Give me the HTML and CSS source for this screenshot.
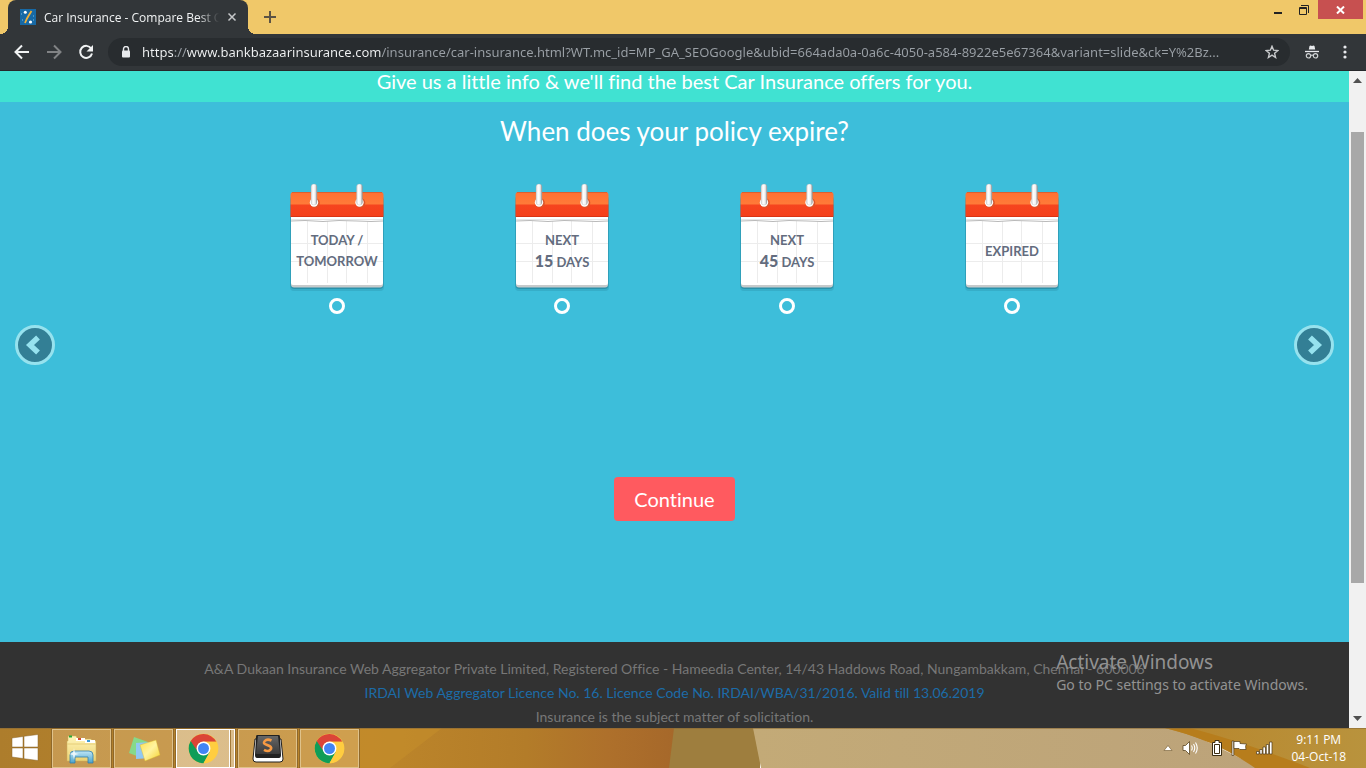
FILE: index.html
```html
<!DOCTYPE html>
<html lang="en">
<head>
<meta charset="utf-8">
<title>Car Insurance - Compare Best Car Insurance</title>
<link rel="stylesheet" href="styles.css">
</head>
<body>
<svg class="defs" aria-hidden="true">
  <defs>
    <linearGradient id="gOrange" x1="0" y1="0" x2="0" y2="1">
      <stop offset="0" stop-color="#ff7032"/><stop offset=".46" stop-color="#ff7a38"/><stop offset=".54" stop-color="#f6441e"/><stop offset="1" stop-color="#f43f1a"/>
    </linearGradient>
    <linearGradient id="gRing" x1="0" y1="0" x2="1" y2="0">
      <stop offset="0" stop-color="#d5d5d5"/><stop offset=".35" stop-color="#fff"/><stop offset=".7" stop-color="#eee"/><stop offset="1" stop-color="#8a8a8a"/>
    </linearGradient>
    <linearGradient id="gFolder" x1="0" y1="0" x2="0" y2="1"><stop offset="0" stop-color="#fff5b8"/><stop offset="1" stop-color="#ecd273"/></linearGradient>
    <linearGradient id="gStand" x1="0" y1="0" x2="0" y2="1"><stop offset="0" stop-color="#bfe6f6"/><stop offset="1" stop-color="#4ba3cc"/></linearGradient>
    <linearGradient id="gNote" x1="0" y1="0" x2="1" y2="1"><stop offset="0" stop-color="#ffe14d"/><stop offset=".5" stop-color="#fff3a0"/><stop offset="1" stop-color="#f5d22d"/></linearGradient>
    <linearGradient id="gKey" x1="0" y1="0" x2="0" y2="1"><stop offset="0" stop-color="#666"/><stop offset="1" stop-color="#3b3b3b"/></linearGradient>
  </defs>
  <symbol id="calendar" viewBox="0 0 100 112">
    <rect x="3" y="14" width="94" height="94" rx="4" fill="#1d6f86" opacity=".2"/>
    <rect x="3.500" y="12" width="93" height="94" rx="4" fill="#1d6f86" opacity=".45"/>
    <rect x="4" y="90" width="92" height="14.500" rx="3" fill="#c6cacb"/>
    <path d="M4 33H96V100a2 2 0 0 1-2 2H6a2 2 0 0 1-2-2Z" fill="#fff"/>
    <path d="M20.500 38V100M40.500 38V100M59.500 38V100M80.500 38V100M4 60.500H96M4 78.500H96" stroke="#ececec" fill="none"/>
    <path d="M3.500 12a3 3 0 0 1 3-3H93.500a3 3 0 0 1 3 3V34H3.500Z" fill="url(#gOrange)"/>
    <path d="M5 9.500H95" stroke="#db6030"/>
    <path d="M4 33.500H96" stroke="#d93313"/>
    <path d="M4 38 18 37.500 36 38.500 52 37.500 70 38 84 38.500 96 38" stroke="#b9b9b9" fill="none"/>
    <path d="M4 36.500H96" stroke="#e6e6e6" fill="none"/>
    <circle cx="28" cy="20" r="4.800" fill="#db542b"/><circle cx="73.500" cy="20" r="4.800" fill="#db542b"/>
    <circle cx="27" cy="19.500" r="4.200" fill="#fff"/><circle cx="72.500" cy="19.500" r="4.200" fill="#fff"/>
    <rect x="24" y="1" width="6" height="21" rx="3" fill="url(#gRing)" stroke="#a5a5a5" stroke-width=".3"/>
    <rect x="69.500" y="1" width="6" height="21" rx="3" fill="url(#gRing)" stroke="#a5a5a5" stroke-width=".3"/>
  </symbol>
  <symbol id="chrome" viewBox="0 0 48 48">
    <circle cx="24" cy="24" r="23" fill="#ffcd40"/>
    <path d="M24 24 4.100 12.500A23 23 0 0 0 24 47L34 29.700Z" fill="#0f9d58"/>
    <path d="M4.100 12.500A23 23 0 0 1 43.900 13.500H24a10.500 10.500 0 0 0-9.900 14Z" fill="#db4437"/>
    <path d="M24 47A23 23 0 0 0 43.900 13.500H24L33.500 29.500Z" fill="#ffcd40"/>
    <circle cx="24" cy="24" r="10.700" fill="#fff"/><circle cx="24" cy="24" r="8.500" fill="#4285f4"/>
  </symbol>
</svg>

<header class="browser">
  <div class="tabstrip">
    <div class="tab">
      <svg class="favicon" viewBox="0 0 16 16"><rect width="16" height="16" fill="#1769a5"/><path d="M11.500 2 9 6 7 9.500 5 14" stroke="#f2ae36" stroke-width="1.800" fill="none"/><circle cx="5.300" cy="3.300" r="1.500" fill="#fff"/><circle cx="10.500" cy="13" r="1.600" fill="#fff"/><path d="M1 5h1M2 11h1M13 7h1M13 11h1" stroke="#7fc0e5"/></svg>
      <span class="tab-title">Car Insurance - Compare Best Ca</span>
      <button class="icon-btn tab-close" aria-label="Close tab"><svg width="10" height="10" viewBox="0 0 10 10"><path d="M1.500 1.500 8.500 8.500M8.500 1.500 1.500 8.500" stroke="#c6c8ca" stroke-width="1.500"/></svg></button>
    </div>
    <button class="icon-btn new-tab" aria-label="New tab"><svg width="12" height="12" viewBox="0 0 12 12"><path d="M6 0V12M0 6H12" stroke="#5c5344" stroke-width="2"/></svg></button>
    <div class="window-controls">
      <button class="icon-btn win" aria-label="Minimize"><svg width="10" height="10" viewBox="0 0 10 10"><path d="M1 8H9" stroke="#222" stroke-width="2"/></svg></button>
      <button class="icon-btn win" aria-label="Restore"><svg width="10" height="10" viewBox="0 0 10 10"><path d="M2 .5H9.500V8M.5 2.500H7.500V9.500H.5ZM.5 3.500H7.500" stroke="#222" fill="none"/></svg></button>
      <button class="icon-btn win-close" aria-label="Close"><svg width="9" height="8" viewBox="0 0 9 8"><path d="M1 .5 8 7.500M8 .5 1 7.500" stroke="#fff" stroke-width="2"/></svg></button>
    </div>
  </div>
  <div class="toolbar">
    <div class="nav">
      <button class="icon-btn" aria-label="Back"><svg width="16" height="16" viewBox="0 0 16 16"><path d="M15 8H2M8 1.500 1.500 8 8 14.500" stroke="#f1f3f4" stroke-width="2" fill="none"/></svg></button>
      <button class="icon-btn" aria-label="Forward"><svg width="16" height="16" viewBox="0 0 16 16"><path d="M1 8H14M8 1.500 14.500 8 8 14.500" stroke="#818385" stroke-width="2" fill="none"/></svg></button>
      <button class="icon-btn" aria-label="Reload"><svg width="16" height="16" viewBox="0 0 16 16"><path d="M13.200 4.500A6 6 0 1 0 14 9.500" stroke="#f1f3f4" stroke-width="2" fill="none"/><path d="M15 1V7.500H8.500Z" fill="#f1f3f4"/></svg></button>
    </div>
    <div class="omnibox">
      <svg width="10" height="12" viewBox="0 0 10 12"><path d="M2.500 5V3a2.500 2.500 0 0 1 5 0V5" stroke="#e8eaed" stroke-width="1.400" fill="none"/><rect x="1" y="4.500" width="8" height="7" rx="1" fill="#e8eaed"/></svg>
      <input class="url" type="text" aria-label="Address" value="https://www.bankbazaarinsurance.com/insurance/car-insurance.html?WT.mc_id=MP_GA_SEOGoogle&amp;ubid=664ada0a-0a6c-4050-a584-8922e5e67364&amp;variant=slide&amp;ck=Y%2Bz...">
      <button class="icon-btn" aria-label="Bookmark"><svg width="14" height="14" viewBox="0 0 14 14"><path d="M7 1.300 8.600 5.200 12.900 5.500 9.600 8.300 10.600 12.500 7 10.200 3.400 12.500 4.400 8.300 1.100 5.500 5.400 5.200Z" stroke="#c8cacc" stroke-width="1.400" fill="none"/></svg></button>
    </div>
    <svg width="14" height="14" viewBox="0 0 14 14"><path d="M3.800 4.500 4.500 1 5.500.5 7 1 8.500.5 9.500 1 10.200 4.500Z" fill="#e8eaed"/><path d="M0 6.500H14" stroke="#e8eaed" stroke-width="1.300"/><g fill="none" stroke="#d0d3d5" stroke-width="1.200"><circle cx="3.500" cy="10.800" r="2.200"/><circle cx="10.500" cy="10.800" r="2.200"/><path d="M5.700 10.500Q7 9.500 8.300 10.500"/></g></svg>
    <button class="icon-btn menu" aria-label="Menu"><svg width="4" height="14" viewBox="0 0 4 14" fill="#e8eaed"><circle cx="2" cy="2" r="1.600"/><circle cx="2" cy="7" r="1.600"/><circle cx="2" cy="12" r="1.600"/></svg></button>
  </div>
</header>

<div class="viewport">
  <div class="page">
    <div class="banner">Give us a little info &amp; we'll find the best Car Insurance offers for you.</div>
    <main class="question">
      <button class="slide-btn" aria-label="Previous"><svg viewBox="0 0 40 40"><circle cx="20" cy="20" r="18.500" fill="#337f95" stroke="#96e2ee" stroke-width="3"/><path d="M23 12.500 15 20 23 27.500" stroke="#96e2ee" stroke-width="5.500" fill="none"/></svg></button>
      <form class="form">
        <h1>When does your policy expire?</h1>
        <div class="options">
          <label class="option"><span class="card"><svg class="cal"><use href="#calendar"/></svg><span class="caption">TODAY /<br>TOMORROW</span></span><input type="radio" name="expiry"></label>
          <label class="option"><span class="card"><svg class="cal"><use href="#calendar"/></svg><span class="caption">NEXT<br><b>15</b> DAYS</span></span><input type="radio" name="expiry"></label>
          <label class="option"><span class="card"><svg class="cal"><use href="#calendar"/></svg><span class="caption">NEXT<br><b>45</b> DAYS</span></span><input type="radio" name="expiry"></label>
          <label class="option"><span class="card"><svg class="cal"><use href="#calendar"/></svg><span class="caption">EXPIRED</span></span><input type="radio" name="expiry"></label>
        </div>
        <button class="continue" type="button">Continue</button>
      </form>
      <button class="slide-btn" aria-label="Next"><svg viewBox="0 0 40 40"><circle cx="20" cy="20" r="18.500" fill="#337f95" stroke="#96e2ee" stroke-width="3"/><path d="M16 12.500 24 20 16 27.500" stroke="#96e2ee" stroke-width="5.500" fill="none"/></svg></button>
    </main>
    <footer class="footer">
      <p>A&amp;A Dukaan Insurance Web Aggregator Private Limited, Registered Office - Hameedia Center, 14/43 Haddows Road, Nungambakkam, Chennai - 600006</p>
      <p><a href="#">IRDAI Web Aggregator Licence No. 16. Licence Code No. IRDAI/WBA/31/2016. Valid till 13.06.2019</a></p>
      <p>Insurance is the subject matter of solicitation.</p>
    </footer>
  </div>
  <div class="scrollbar">
    <svg width="9" height="5" viewBox="0 0 9 5"><path d="M4.500 0 9 5H0Z" fill="#505050"/></svg>
    <div class="track"><div class="thumb"></div></div>
    <svg width="9" height="5" viewBox="0 0 9 5"><path d="M4.500 5 9 0H0Z" fill="#505050"/></svg>
  </div>
  <div class="watermark"><strong>Activate Windows</strong><span>Go to PC settings to activate Windows.</span></div>
</div>

<div class="taskbar">
  <svg class="wallpaper" viewBox="0 0 1366 40" preserveAspectRatio="none" aria-hidden="true">
    <defs>
      <linearGradient id="wa"><stop offset="0" stop-color="#ad7d2c"/><stop offset=".55" stop-color="#bd862a"/><stop offset=".78" stop-color="#b37c29"/><stop offset=".9" stop-color="#ae702b"/><stop offset="1" stop-color="#a6682a"/></linearGradient>
      <linearGradient id="wb"><stop offset="0" stop-color="#c3aa77"/><stop offset="1" stop-color="#bca37a"/></linearGradient>
      <linearGradient id="wc"><stop offset="0" stop-color="#b8862c"/><stop offset="1" stop-color="#b9933d"/></linearGradient>
    </defs>
    <rect width="675" height="40" fill="url(#wa)"/>
    <path d="M340 0H442L390 40H340Z" fill="#c48e2c" opacity=".6"/>
    <path d="M674 0H760V40H669Z" fill="#9e7e3e"/>
    <path d="M753 0H1180L1260 40H761Z" fill="url(#wb)"/>
    <path d="M1165 0H1366V40H1262Q1215 12 1165 0Z" fill="url(#wc)"/>
    <path d="M1165 0H1190Q1250 16 1310 40H1255Q1215 12 1165 0Z" fill="#b77d1c"/>
    <path d="M0 .5H1366" stroke="#8a6a36" opacity=".6"/>
  </svg>
  <button class="start" aria-label="Start"><svg width="28" height="28" viewBox="0 0 28 28"><path d="M1 4 12 2.500V13H1ZM13 2.300 27 .5V13H13ZM1 14H12V24.500L1 23ZM13 14H27V26.500L13 24.700Z" fill="#fff" stroke="#8a6428" stroke-width=".5"/></svg></button>
  <div class="apps">
    <button class="app" aria-label="File Explorer"><svg width="34" height="32" viewBox="0 0 34 32"><path d="M3 4a1 1 0 0 1 1-1H11L12 5H18L19 6H26L27 8H31V28H2V8H3Z" fill="url(#gFolder)" stroke="#c9ad58" stroke-width=".5"/><path d="M11 5H20V8H11ZM20 7H30V10H20Z" fill="#fff"/><path d="M4 3.500H7" stroke="#25a83b" stroke-width="2"/><path d="M13 6H16" stroke="#d44c31" stroke-width="2"/><path d="M22 8H25" stroke="#3e9ad3" stroke-width="2"/><path d="M2 11H31" stroke="#e6ce79"/><path d="M5 30V22Q5 18 9 18H24Q28 18 28 22V30H23V24H10V30Z" fill="url(#gStand)" stroke="#327fa8" stroke-width=".8"/><path d="M9 15 10 20 14 21 10 22 9 27 8 22 4 21 8 20Z" fill="#fff" opacity=".8"/></svg></button>
    <button class="app" aria-label="Sticky Notes"><svg width="34" height="32" viewBox="0 0 34 32"><path d="M7 4 21 9 15 25 2 20Z" fill="#86d98a"/><path d="M9 10 23 9 24 25 9 26Z" fill="#91c8f2"/><path d="M13 12 29 7 33 22 18 28Z" fill="url(#gNote)" stroke="#d9b927" stroke-width=".4"/></svg></button>
    <button class="app active" aria-label="Chrome"><svg width="31" height="31"><use href="#chrome"/></svg></button>
    <button class="app" aria-label="Sublime Text"><svg width="32" height="30" viewBox="0 0 32 30"><path d="M3 5H29L31 25Q31 28 28 28H4Q1 28 1 25Z" fill="#fff" stroke="#1f1f1f"/><path d="M5 1H27Q28 1 28 3L29 21Q29 24 27 24H5Q3 24 3 21L4 3Q4 1 5 1Z" fill="#222"/><path d="M6 2H26L28 19Q28 20 27 20H5Q4 20 4 19Z" fill="url(#gKey)"/><path d="M19.500 6.500Q15 4.500 12.800 7T14 10.500L17.500 12Q20.500 13.500 18.300 15.800T12 15.800" stroke="#f79a43" stroke-width="2.600" fill="none"/></svg></button>
    <button class="app" aria-label="Chrome"><svg width="31" height="31"><use href="#chrome"/></svg></button>
  </div>
  <div class="tray">
    <svg width="10" height="6" viewBox="0 0 10 6"><path d="M5 .5 9 5.500H1Z" fill="#fff" stroke="#6f562a" stroke-width=".6"/></svg>
    <svg width="16" height="16" viewBox="0 0 16 16"><path d="M1 5.500H3.500L7.500 1.500V14.500L3.500 10.500H1Z" fill="#fff" stroke="#5a4520" stroke-width=".8"/><path d="M9.500 5.500Q11 8 9.500 10.500M11.500 4Q14 8 11.500 12M13.500 2.500Q17 8 13.500 13.500" stroke="#fff" stroke-width="1.100" fill="none"/></svg>
    <svg class="battery" width="10" height="16" viewBox="0 0 10 16"><path d="M3 .5H7V2.500H9.500V15.500H.5V2.500H3Z" fill="#fff" stroke="#3b2d12"/><path d="M2.500 4.500H7.500V13.500H2.500Z" fill="#fff" stroke="#3b2d12"/></svg>
    <svg width="16" height="16" viewBox="0 0 16 16"><path d="M1 1H2.800V15.500H1Z" fill="#fff" stroke="#4a3818" stroke-width=".7"/><path d="M3 1.500H9V3.500L15.500 4Q14 5.500 15 9.500H9L8 8.500H3Z" fill="#fff" stroke="#4a3818" stroke-width=".7"/></svg>
    <svg width="17" height="14" viewBox="0 0 17 14" fill="#fff" stroke="#4a3818" stroke-width=".7"><path d="M.5 10.500H3V13H.5ZM3.800 8.500H6.200V13H3.800ZM7 6H9.500V13H7ZM10.300 3.500H12.700V13H10.300ZM13.500 1H16V13H13.500Z"/></svg>
    <div class="clock"><time>9:11 PM</time><time>04-Oct-18</time></div>
  </div>
</div>
</body>
</html>
```
FILE: styles.css
```css
* { box-sizing: border-box; }

body {
  margin: 0;
  height: 100vh;
  display: flex;
  flex-direction: column;
  overflow: hidden;
  font-family: Lato, sans-serif;
  font-variant-ligatures: none;
}

button { font: inherit; font-variant-ligatures: none; margin: 0; cursor: pointer; }
svg { display: block; flex: none; }
.defs { position: absolute; width: 0; height: 0; }

.icon-btn {
  display: flex;
  align-items: center;
  justify-content: center;
  padding: 0;
  border: 0;
  background: none;
}

/* Browser window */
.browser {
  flex: none;
  background: #f0c869;
  font-family: "Noto Sans", sans-serif;
}

.tabstrip { display: flex; height: 34px; }

.tab {
  position: relative;
  display: flex;
  align-items: center;
  gap: 8px;
  width: 240px;
  margin-left: 8px;
  padding: 0 11px 0 12px;
  background: #323639;
  border-radius: 8px 8px 0 0;
}
.tab::before,
.tab::after {
  content: "";
  position: absolute;
  bottom: 0;
  width: 8px;
  height: 8px;
}
.tab::before { right: 100%; background: radial-gradient(circle at 0 0, transparent 8px, #323639 8px); }
.tab::after { left: 100%; background: radial-gradient(circle at 100% 0, transparent 8px, #323639 8px); }

.favicon { width: 16px; height: 16px; }
.tab-title {
  flex: 1;
  overflow: hidden;
  white-space: nowrap;
  font-family: "Open Sans", sans-serif;
  font-size: 12px;
  color: #f1f3f4;
  -webkit-mask-image: linear-gradient(90deg, #000 88%, transparent);
  mask-image: linear-gradient(90deg, #000 88%, transparent);
}
.new-tab { width: 44px; }

.window-controls { display: flex; margin-left: auto; padding-right: 3px; }
.win { width: 26px; height: 19px; }
.win-close { width: 45px; height: 19px; margin-left: 1px; background: #c75050; }

.toolbar {
  display: flex;
  align-items: center;
  height: 37px;
  padding: 0 19px 1px 14px;
  background: #323639;
  border-bottom: 1px solid #26282b;
}
.nav { display: flex; gap: 16px; }
.omnibox {
  flex: 1;
  display: flex;
  align-items: center;
  gap: 11px;
  height: 28px;
  margin: 0 15px 0 14px;
  padding: 0 11px 0 13px;
  background: #282c2f;
  border-radius: 14px;
}
.url {
  flex: 1;
  min-width: 0;
  padding: 0;
  border: 0;
  outline: 0;
  font-family: "Noto Sans", sans-serif;
  font-size: 13px;
  color: transparent;
  background: linear-gradient(90deg, #f1f3f4 32px, #9aa0a6 32px, #9aa0a6 45px, #f1f3f4 45px, #f1f3f4 239px, #9aa0a6 239px);
  -webkit-background-clip: text;
  background-clip: text;
}
.menu { margin-left: 24px; }

/* Page */
.viewport {
  position: relative;
  flex: 1;
  min-height: 0;
  display: flex;
}
.page {
  flex: 1;
  display: flex;
  flex-direction: column;
  overflow: hidden;
}
.banner {
  height: 31px;
  line-height: 20px;
  text-align: center;
  font-size: 20px;
  color: #fff;
  background: #40e2d2;
}
.question {
  flex: 1;
  display: flex;
  align-items: center;
  justify-content: space-between;
  padding: 0 15px;
  background: #3dbeda;
}
.slide-btn {
  width: 40px;
  height: 40px;
  padding: 0;
  border: 0;
  margin-bottom: 54px;
  background: none;
  border-radius: 50%;
}
.form {
  align-self: stretch;
  display: flex;
  flex-direction: column;
  align-items: center;
  padding-top: 13px;
}
h1 {
  margin: 0;
  font-size: 26px;
  line-height: 32px;
  font-weight: 400;
  color: #fff;
}
.options {
  display: grid;
  grid-template-columns: repeat(4, 225px);
  margin-top: 36px;
}
.option {
  display: flex;
  flex-direction: column;
  align-items: center;
  gap: 3px;
}
.card { display: grid; }
.card > * { grid-area: 1 / 1; }
.cal { width: 100px; height: 112px; }
.caption {
  align-self: center;
  padding-top: 24px;
  text-align: center;
  font-size: 13px;
  line-height: 21px;
  font-weight: 700;
  color: #636c7e;
}
.caption b { font-size: 16px; line-height: 20px; }
.option input {
  appearance: none;
  width: 16px;
  height: 16px;
  margin: 0;
  border: 3px solid #fff;
  border-radius: 50%;
}
.continue {
  margin-top: 163px;
  padding: 0 20px;
  border: 0;
  border-radius: 4px;
  font-size: 20px;
  line-height: 44px;
  color: #fff;
  background: #ff5a5f;
}

.footer {
  height: 86px;
  padding-top: 15px;
  text-align: center;
  font-size: 14px;
  line-height: 24px;
  color: #777;
  background: #323232;
}
.footer p { margin: 0; }
.footer a { color: #1c6ca8; text-decoration: none; }

.scrollbar {
  width: 17px;
  display: flex;
  flex-direction: column;
  align-items: center;
  gap: 6px;
  padding: 7px 0;
  background: #f1f1f1;
}
.track { flex: 1; width: 13px; padding-top: 43px; }
.thumb { height: 78%; background: #a8a8a8; }

.watermark {
  position: absolute;
  right: 58px;
  bottom: 33px;
  display: flex;
  flex-direction: column;
  font-family: "Noto Sans", sans-serif;
  color: #929292;
}
.watermark strong { font-size: 19px; line-height: 23px; font-weight: 400; }
.watermark span { font-size: 14px; line-height: 21px; }

/* Taskbar */
.taskbar {
  position: relative;
  isolation: isolate;
  flex: none;
  display: flex;
  height: 40px;
  overflow: hidden;
}
.wallpaper { position: absolute; inset: 0; width: 100%; height: 100%; z-index: -1; }
.start { display: flex; align-items: center; width: 52px; padding: 0 0 0 11px; border: 0; background: none; }
.apps { display: flex; gap: 3px; padding-top: 1px; }
.app {
  display: flex;
  align-items: center;
  justify-content: center;
  width: 59px;
  padding: 0;
  border: 1px solid #dfc28b;
  outline: 1px solid #8f682a;
  background: rgba(222, 182, 120, .48);
}
.app.active {
  padding-right: 5px;
  border-color: #fff;
  background: linear-gradient(90deg, rgba(235, 215, 180, .7) 52px, #fff 52px, #fff 53px, #a37a39 53px, #a37a39 54px, rgba(235, 215, 180, .7) 54px);
}
.tray {
  display: flex;
  align-items: center;
  gap: 9px;
  margin-left: auto;
  padding-right: 20px;
}
.battery { margin-left: 5px; }
.clock {
  display: flex;
  flex-direction: column;
  align-items: center;
  margin-left: 9px;
  font-family: "Open Sans", sans-serif;
  font-size: 12px;
  line-height: 17px;
  color: #fff;
}
```
